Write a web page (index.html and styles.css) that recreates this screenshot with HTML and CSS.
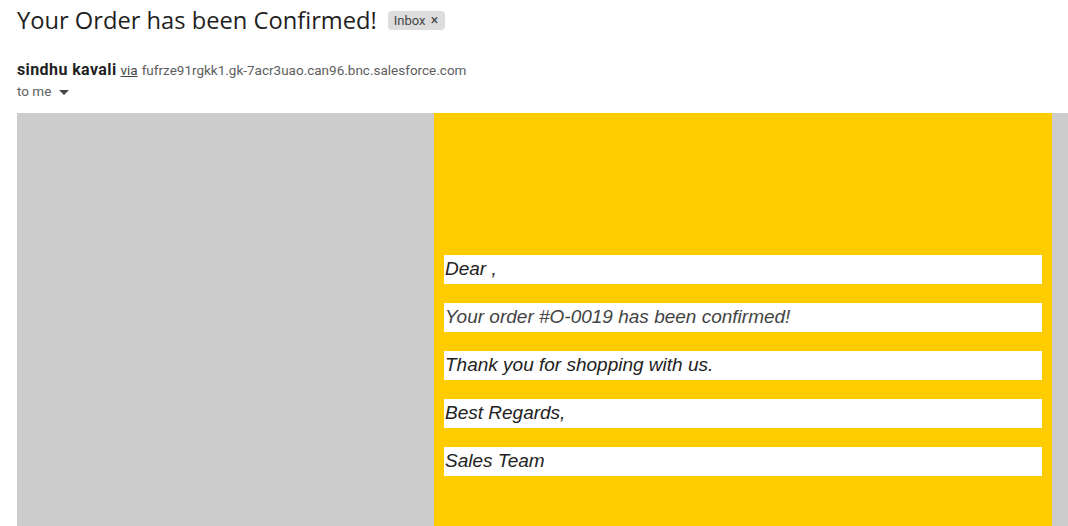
FILE: index.html
```html
<!DOCTYPE html>
<html>
<head>
<meta charset="utf-8">
<link rel="stylesheet" href="styles.css">
</head>
<body>
<div class="mail">
  <div class="subject-row">
    <h1 class="subject">Your Order has been Confirmed!</h1>
    <span class="chip">Inbox <span class="chip-x">×</span></span>
  </div>
  <div class="sender">
    <span class="name">sindhu kavali</span>
    <span class="via">via</span>
    <span class="domain">fufrze91rgkk1.gk-7acr3uao.can96.bnc.salesforce.com</span>
  </div>
  <div class="tome">to me <svg class="caret" width="10" height="5" viewBox="0 0 10 5"><path d="M0 0h10L5 5z" fill="#444"/></svg></div>
  <div class="body-bg">
    <div class="spacer"></div>
    <div class="card">
      <p class="line">Dear ,</p>
      <p class="line soft">Your order #O-0019 has been confirmed!</p>
      <p class="line">Thank you for shopping with us.</p>
      <p class="line">Best Regards,</p>
      <p class="line">Sales Team</p>
    </div>
    <div class="right"></div>
  </div>
</div>
</body>
</html>
```
FILE: styles.css
```css
html, body {
  margin: 0;
  padding: 0;
  background: #fff;
  overflow: hidden;
}
.mail {
  padding-left: 17px;
  font-family: Roboto, "Liberation Sans", sans-serif;
  color: #1f1f1f;
  height: 526px;
  overflow: hidden;
}
.subject-row {
  display: flex;
  align-items: center;
  height: 40px;
}
.subject {
  margin: 0;
  font-family: "Open Sans", Roboto, sans-serif;
  font-weight: 400;
  font-size: 23.7px;
  line-height: 30px;
  color: #1f1f1f;
  margin-top: -1px;
}
.chip {
  margin-left: 11px;
  margin-top: 0;
  background: #dddddd;
  border-radius: 4px;
  font-size: 13px;
  line-height: 18px;
  padding: 0 7px 0 6px;
  color: #444746;
}
.chip-x {
  font-size: 14px;
  margin-left: 2px;
}
.sender {
  margin-top: 20px;
  font-size: 16px;
  line-height: 20px;
  white-space: nowrap;
}
.name {
  font-weight: 700;
  color: #1f1f1f;
  letter-spacing: 0.4px;
}
.via {
  font-size: 13.5px;
  color: #444746;
  text-decoration: underline;
}
.domain {
  font-size: 13.5px;
  color: #5e5e5e;
}
.tome {
  font-size: 13.5px;
  line-height: 20px;
  color: #5e5e5e;
  margin-top: 1px;
}
.caret {
  margin-left: 4px;
  vertical-align: middle;
}
.body-bg {
  margin-top: 12px;
  display: flex;
  background: #cccccc;
  height: 420px;
}
.spacer {
  width: 417px;
  flex: none;
}
.card {
  width: 618px;
  flex: none;
  background: #ffcc00;
  padding: 142px 10px 0;
  box-sizing: border-box;
}
.right {
  flex: 1;
}
.line {
  margin: 0 0 19.5px;
  background: #fff;
  font-family: "Liberation Sans", Arial, sans-serif;
  font-style: italic;
  font-size: 19px;
  line-height: 28.5px;
  padding-left: 1px;
  color: #222;
}
.line.soft {
  color: #444;
}
```
